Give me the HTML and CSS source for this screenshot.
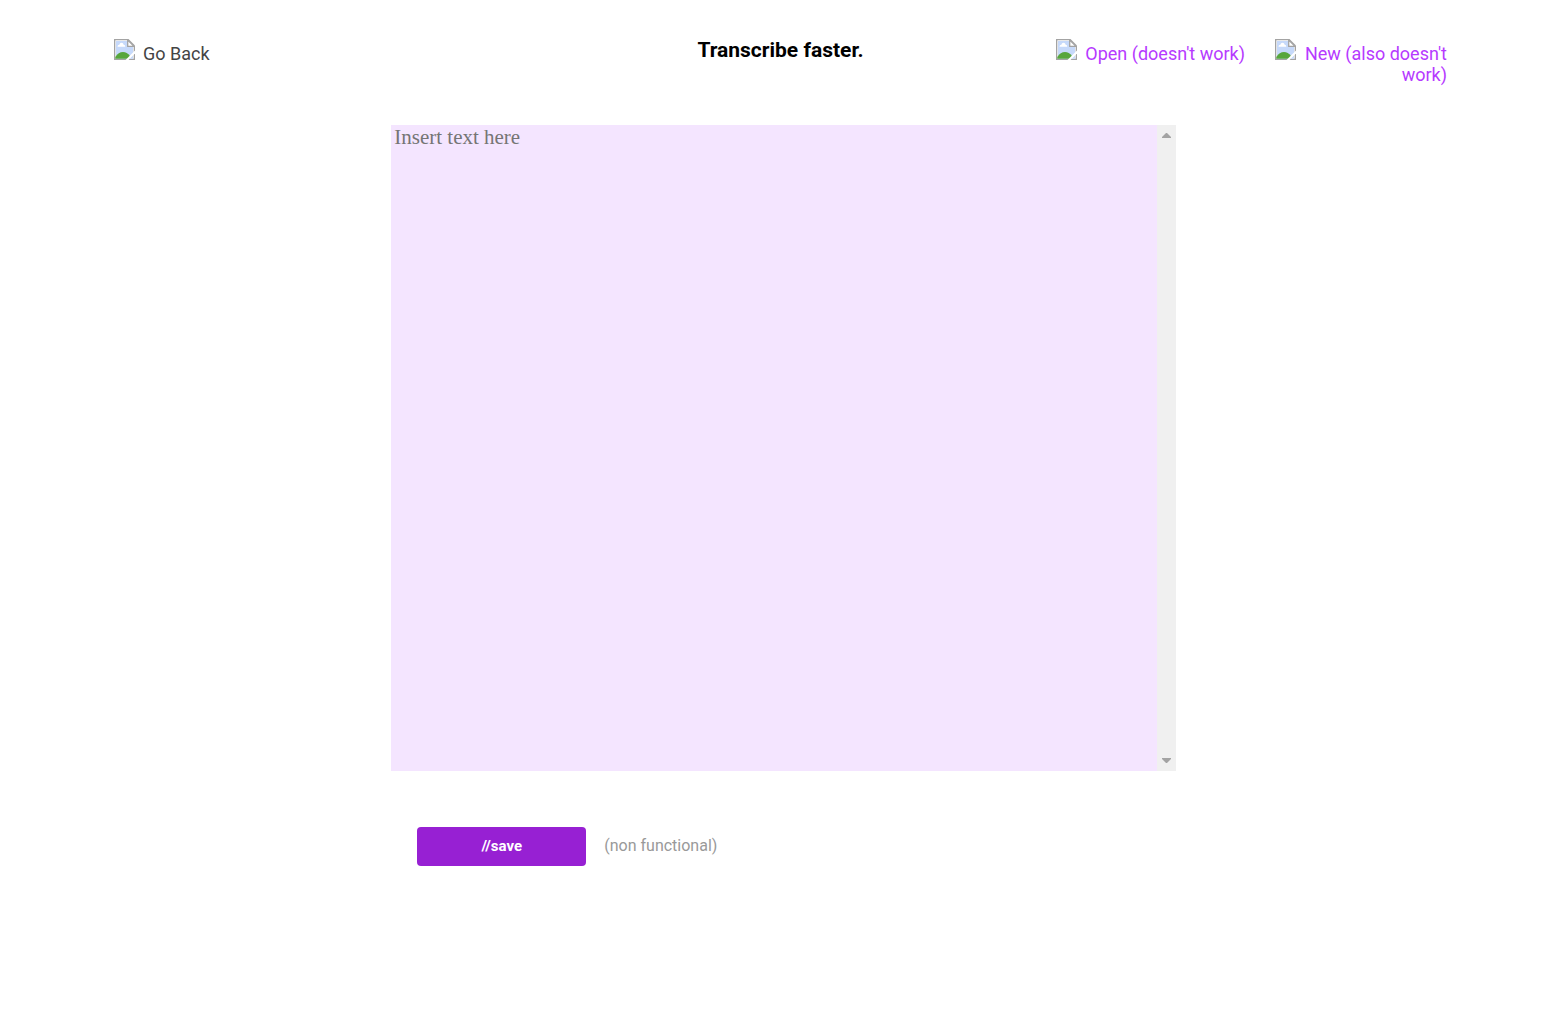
FILE: index.html
```html
<!DOCTYPE html>
<html lang="en">
<head>
  <meta charset="utf-8">
  <meta name="viewport" content="width=device-width, initial-scale=1">
  <title>Transcribe faster.</title>
  <link rel="stylesheet" href="styles.css">
</head>
<body>
  <svg class="symbols" aria-hidden="true">
    <symbol id="picture" viewBox="0 0 21 21">
      <path d="M0 0H14.500L21 6.500V21H0Z" fill="#a3a3a3"/>
      <path d="M1.300 1.300H13.700L19.700 7.300V19.700H1.300Z" fill="#fff"/>
      <path d="M2 2H13V8H19V19.700H2Z" fill="#c6d9fa"/>
      <path d="M3.500 7.800Q3.500 5.800 5.300 5.800Q5.800 3.800 7.500 3.800Q9.300 3.800 9.700 5.800Q11.300 6 11.300 7.800Z" fill="#fff"/>
      <path d="M1.300 19.700V18Q4.500 13 9 13Q13 13 16 17V19.700Z" fill="#57a63c"/>
      <path d="M13.700 1V7.300H20Z" fill="#fff" stroke="#a3a3a3" stroke-width="1.300"/>
      <path d="M11.500 21L21 11.500V14.500L14.500 21Z" fill="#fff"/>
    </symbol>
  </svg>
  <header class="header">
    <nav class="back">
      <a class="link link-muted" href="#"><svg class="icon" aria-hidden="true"><use href="#picture"/></svg><span>Go Back</span></a>
    </nav>
    <h1 class="title">Transcribe faster.</h1>
    <nav class="actions">
      <a class="link" href="#"><svg class="icon" aria-hidden="true"><use href="#picture"/></svg><span>Open (doesn't work)</span></a>
      <a class="link link-new" href="#"><svg class="icon" aria-hidden="true"><use href="#picture"/></svg><span>New (also doesn't work)</span></a>
    </nav>
  </header>
  <main class="main">
    <div class="editor">
      <textarea class="text" aria-label="Transcript" placeholder="Insert text here"></textarea>
      <div class="rail" aria-hidden="true">
        <svg class="arrow" viewBox="0 0 9 5"><path d="M0 5V4L4 0H5L9 4V5Z"/></svg>
        <svg class="arrow" viewBox="0 0 9 5"><path d="M0 0V1L4 5H5L9 1V0Z"/></svg>
      </div>
    </div>
    <div class="footer">
      <button class="save" type="button">//save</button>
      <span class="note">(non functional)</span>
    </div>
  </main>
</body>
</html>
```
FILE: styles.css
```css
* {
  box-sizing: border-box;
}

body {
  margin: 0;
  background: #fff;
  font-family: Roboto, sans-serif;
}

.symbols {
  display: none;
}

.header {
  display: grid;
  grid-template-columns: 1fr auto 1fr;
  align-items: start;
  padding: 39px 114px 0;
}

.title {
  margin: 0;
  font-size: 21px;
  line-height: 22px;
  font-weight: 700;
  color: #000;
}

.actions {
  display: flex;
  justify-content: flex-end;
  gap: 30px;
}

.link {
  display: inline-flex;
  align-items: flex-start;
  gap: 8px;
  font-size: 18px;
  line-height: 21px;
  color: #b63aff;
  text-align: right;
  text-decoration: none;
}

.link span {
  padding-top: 4px;
}

.link-muted {
  color: #444;
}

.link-new {
  max-width: 172px;
}

.icon {
  flex: none;
  width: 21px;
  height: 21px;
}

.main {
  width: calc(50% + 4px);
  margin: 40px 0 0 calc(25% + 1px);
}

.editor {
  display: flex;
  height: 64vh;
  background: #f4e5ff;
}

.text {
  flex: 1;
  min-width: 0;
  padding: 1px 3px;
  border: 0;
  outline: 0;
  resize: none;
  background: transparent;
  font-family: "Liberation Serif", serif;
  font-size: 21px;
  line-height: 22px;
}

.text::placeholder {
  color: #757575;
}

.rail {
  display: flex;
  flex-direction: column;
  justify-content: space-between;
  align-items: center;
  width: 19px;
  padding: 8px 0;
  background: #f0f0f0;
}

.arrow {
  width: 9px;
  height: 5px;
  fill: #a3a3a3;
}

.footer {
  display: flex;
  align-items: center;
  gap: 18px;
  padding: 56px 26px;
}

.save {
  width: 169px;
  height: 39px;
  padding: 0;
  border: 0;
  border-radius: 4px;
  background: #9720d3;
  color: #fff;
  font: 700 15px/18px Roboto, sans-serif;
}

.note {
  font-size: 16px;
  line-height: 18px;
  color: #999;
}
```
